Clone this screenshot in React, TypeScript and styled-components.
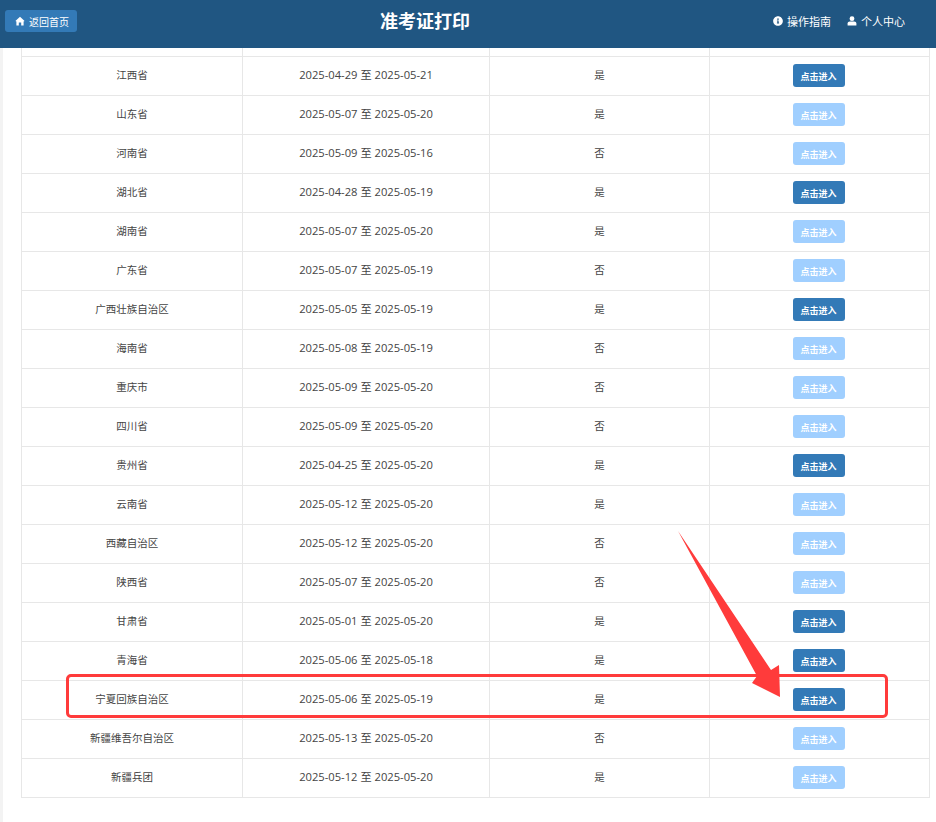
import React from 'react'
import styled, { createGlobalStyle } from 'styled-components'
import { FaInfoCircle } from 'react-icons/fa'

type Row = {
	name: string,
	start: string,
	end: string,
	open: string,
	active?: boolean,
}

const rows: Row[] = [
	{ name: '江西省', start: '2025-04-29', end: '2025-05-21', open: '是', active: true },
	{ name: '山东省', start: '2025-05-07', end: '2025-05-20', open: '是' },
	{ name: '河南省', start: '2025-05-09', end: '2025-05-16', open: '否' },
	{ name: '湖北省', start: '2025-04-28', end: '2025-05-19', open: '是', active: true },
	{ name: '湖南省', start: '2025-05-07', end: '2025-05-20', open: '是' },
	{ name: '广东省', start: '2025-05-07', end: '2025-05-19', open: '否' },
	{ name: '广西壮族自治区', start: '2025-05-05', end: '2025-05-19', open: '是', active: true },
	{ name: '海南省', start: '2025-05-08', end: '2025-05-19', open: '否' },
	{ name: '重庆市', start: '2025-05-09', end: '2025-05-20', open: '否' },
	{ name: '四川省', start: '2025-05-09', end: '2025-05-20', open: '否' },
	{ name: '贵州省', start: '2025-04-25', end: '2025-05-20', open: '是', active: true },
	{ name: '云南省', start: '2025-05-12', end: '2025-05-20', open: '是' },
	{ name: '西藏自治区', start: '2025-05-12', end: '2025-05-20', open: '否' },
	{ name: '陕西省', start: '2025-05-07', end: '2025-05-20', open: '否' },
	{ name: '甘肃省', start: '2025-05-01', end: '2025-05-20', open: '是', active: true },
	{ name: '青海省', start: '2025-05-06', end: '2025-05-18', open: '是', active: true },
	{ name: '宁夏回族自治区', start: '2025-05-06', end: '2025-05-19', open: '是', active: true },
	{ name: '新疆维吾尔自治区', start: '2025-05-13', end: '2025-05-20', open: '否' },
	{ name: '新疆兵团', start: '2025-05-12', end: '2025-05-20', open: '是' },
]

const HomeIcon = () => (
	<svg width="10" height="10" viewBox="0 0 10 10" fill="currentColor" aria-hidden="true">
		<path d="M5 .8 9.6 5 8.6 5.4V9.4H6.2V6.6H3.8V9.4H1.4V5.4L.4 5Z" />
	</svg>
)

const UserIcon = () => (
	<svg width="10" height="10" viewBox="0 0 10 10" fill="currentColor" aria-hidden="true">
		<circle cx="5" cy="2.7" r="2.4" />
		<path d="M.6 9.6V7.6C.6 6.3 1.6 5.5 2.8 5.5H7.2C8.4 5.5 9.4 6.3 9.4 7.6V9.6Z" />
	</svg>
)

export default function App() {
	return (
		<>
			<GlobalStyle />
			<Header>
				<BackButton>
					<HomeIcon />
					返回首页
				</BackButton>
				<Title>准考证打印</Title>
				<Nav>
					<NavItem>
						<FaInfoCircle size={10} />
						操作指南
					</NavItem>
					<NavItem>
						<UserIcon />
						个人中心
					</NavItem>
				</Nav>
			</Header>
			<Page>
				<Table>
					<colgroup>
						<col width={221} />
						<col width={247} />
						<col width={220} />
						<col width={220} />
					</colgroup>
					<tbody>
						<ClippedRow>
							<td />
							<td />
							<td />
							<td />
						</ClippedRow>
						{rows.map(row => (
							<tr key={row.name}>
								<td>{row.name}</td>
								<DateCell>{row.start} 至 {row.end}</DateCell>
								<td>{row.open}</td>
								<td>
									<EnterButton $active={row.active}>点击进入</EnterButton>
								</td>
							</tr>
						))}
					</tbody>
				</Table>
				<Highlight />
				<Arrow viewBox="0 0 110 170" aria-hidden="true">
					<polygon points="1,1 94,140 102,135 103,167 75,153 80,146" fill="#ff3b3b" />
				</Arrow>
			</Page>
		</>
	)
}

const GlobalStyle = createGlobalStyle`
	html, body {
		margin: 0;
		padding: 0;
		background: #fff;
		color: #333;
		font-family: "Open Sans", "Noto Sans CJK SC", sans-serif;
	}
`

const Header = styled.header`
	height: 48px;
	box-sizing: border-box;
	padding: 0 31px 0 5px;
	display: flex;
	align-items: center;
	justify-content: space-between;
	background: #205682;
	color: #fff;
`

const BackButton = styled.a`
	width: 72px;
	height: 22px;
	margin-bottom: 6px;
	box-sizing: border-box;
	padding-left: 10px;
	display: flex;
	align-items: center;
	gap: 4px;
	border-radius: 3px;
	background: #337ab7;
	color: #fff;
	font-size: 10px;
	white-space: nowrap;
`

const Title = styled.h1`
	margin: 0 0 6px;
	font-size: 18px;
	font-weight: 700;
	line-height: 1;
`

const Nav = styled.nav`
	display: flex;
	gap: 16px;
	margin-bottom: 6px;
`

const NavItem = styled.a`
	display: flex;
	align-items: center;
	gap: 4px;
	color: #fff;
	font-size: 11px;
`

const Page = styled.main`
	position: relative;
	height: 774px;
	padding-left: 21px;
	background: linear-gradient(to right, #f3f3f3 3px, #fff 3px);
`

const Table = styled.table`
	width: 909px;
	table-layout: fixed;
	border-collapse: collapse;
	font-size: 10.5px;
	color: #444;

	td {
		height: 39px;
		padding: 0 0 2px;
		box-sizing: border-box;
		border: 1px solid #e7e7e7;
		text-align: center;
		vertical-align: middle;
	}
`

const DateCell = styled.td`
	&& {
		padding-bottom: 4px;
	}
	font-size: 11.2px;
`

const ClippedRow = styled.tr`
	td {
		height: 8px;
		padding: 0;
		border-top: 0;
	}
`

const EnterButton = styled.a<{ $active?: boolean }>`
	width: 52px;
	height: 23px;
	margin: 1px 2px 0 0;
	padding-top: 2px;
	box-sizing: border-box;
	display: inline-flex;
	align-items: center;
	justify-content: center;
	vertical-align: middle;
	border-radius: 3px;
	background: ${p => (p.$active ? '#337ab7' : '#a0cfff')};
	color: #fff;
	font-size: 9px;
	font-weight: 700;
`

const Highlight = styled.div`
	position: absolute;
	left: 66px;
	top: 626px;
	width: 822px;
	height: 44px;
	box-sizing: border-box;
	border: 3px solid #ff3b3b;
	border-radius: 5px;
`

const Arrow = styled.svg`
	position: absolute;
	left: 677px;
	top: 482px;
	width: 110px;
	height: 170px;
`
